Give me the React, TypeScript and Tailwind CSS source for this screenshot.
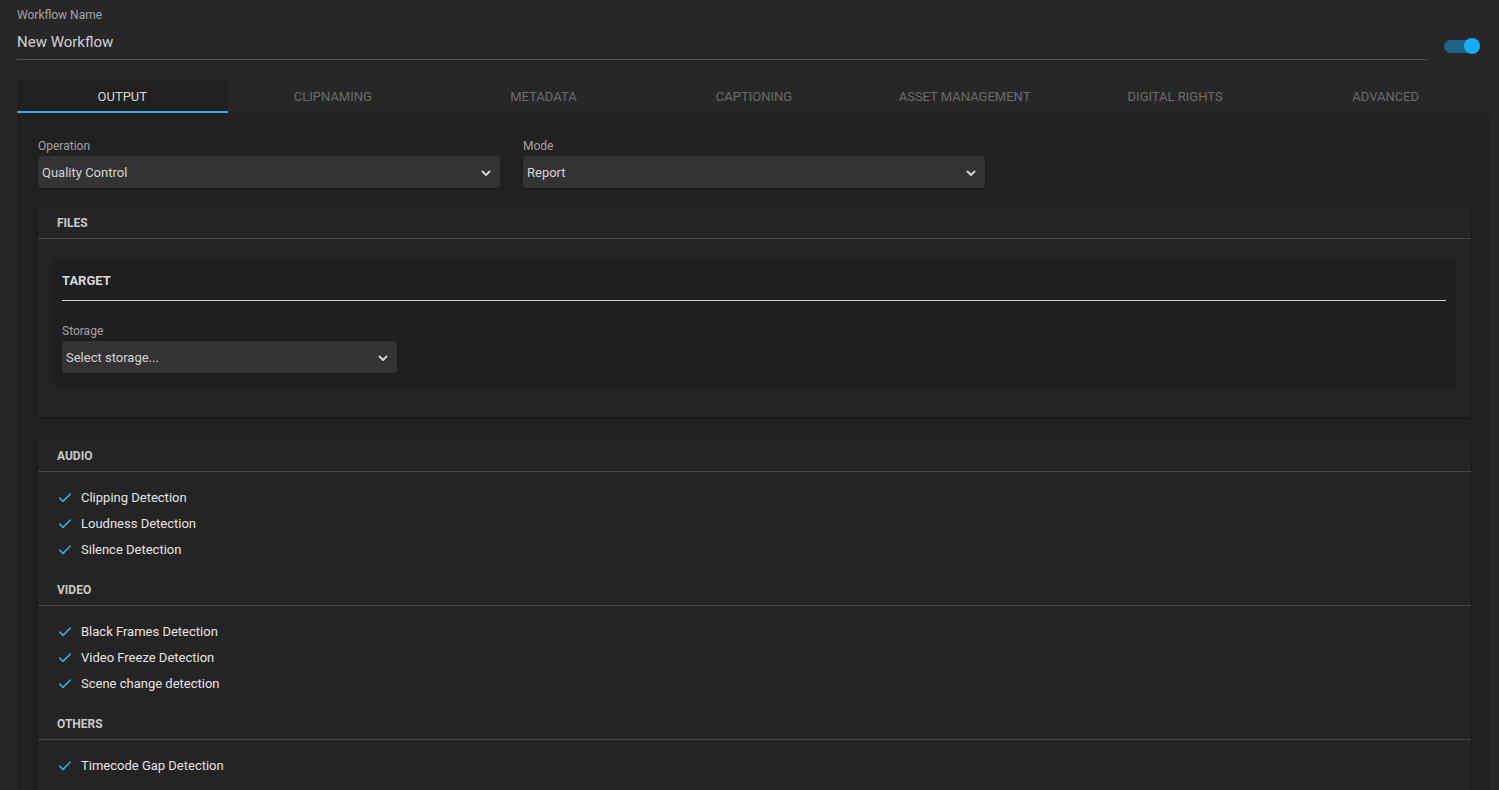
import { Check } from 'lucide-react';

const tabs = ['Output', 'Clipnaming', 'Metadata', 'Captioning', 'Asset Management', 'Digital Rights', 'Advanced'];

const sections = [
  { title: 'AUDIO', items: ['Clipping Detection', 'Loudness Detection', 'Silence Detection'] },
  { title: 'VIDEO', items: ['Black Frames Detection', 'Video Freeze Detection', 'Scene change detection'] },
  { title: 'OTHERS', items: ['Timecode Gap Detection'] },
];

function Chevron() {
  return (
    <svg width="10" height="7" viewBox="0 0 10 7" className="text-[#d0d0d0]">
      <path d="M1.5 1.5l3.5 3.5 3.5-3.5" fill="none" stroke="currentColor" strokeWidth="2" strokeLinecap="round" strokeLinejoin="round" />
    </svg>
  );
}

function Select({ label, value, width }: { label: string; value: string; width: string }) {
  return (
    <div className={width}>
      <div className="text-[12px] leading-4 text-[#a3a3a3]">{label}</div>
      <div className="mt-[2px] h-[32px] rounded-[3px] bg-[#333333] flex items-center justify-between pl-[4px] pr-[9px] pt-[2px] shadow-[0_1px_2px_rgba(0,0,0,0.3)]">
        <span className="text-[13px] text-[#d4d4d4]">{value}</span>
        <Chevron />
      </div>
    </div>
  );
}

export default function App() {
  return (
    <div className="min-h-screen bg-[#272727] pl-[17px] pr-[8px] font-['Roboto','Liberation_Sans',sans-serif]">
      {/* Header */}
      <div className="flex pt-[7px]">
        <div className="flex-1">
          <div className="text-[12px] leading-4 text-[#a3a3a3]">Workflow Name</div>
          <div className="mt-[9px] pb-[7px] border-b border-[#4f4f4f] text-[15px] leading-5 text-[#d2d2d2]">New Workflow</div>
        </div>
        <div className="w-[64px] pl-[17px]">
          <div className="relative mt-[31px] h-[16px] w-[36px]">
            <div className="absolute left-0 top-[2px] h-[13px] w-[33px] rounded-full bg-[#1d6585]" />
            <div className="absolute right-0 top-0 h-[16px] w-[16px] rounded-full bg-[#14adf7]" />
          </div>
        </div>
      </div>

      {/* Tabs */}
      <div className="mt-[20px] grid grid-cols-7">
        {tabs.map((t, i) => (
          <div
            key={t}
            className={
              i === 0
                ? 'h-[33px] flex items-center justify-center pt-[2px] bg-[#202020] border-b-2 border-[#3aa7e0] text-[13px] uppercase text-[#d8d8d8]'
                : 'h-[33px] flex items-center justify-center text-[13px] uppercase text-[#6c6c6c]'
            }
          >
            {t}
          </div>
        ))}
      </div>

      {/* Panel */}
      <div className="bg-[#212121] px-[21px] pr-[20px] pt-[25px] pb-[40px]">
        <div className="flex gap-[23px]">
          <Select label="Operation" value="Quality Control" width="w-[462px]" />
          <Select label="Mode" value="Report" width="w-[462px]" />
        </div>

        {/* Files card */}
        <div className="mt-[19px] bg-[#242424] shadow-[0_1px_3px_rgba(0,0,0,0.45)] pb-[30px]">
          <div className="h-[32px] flex items-center px-[19px] border-b border-[#474747] text-[12px] font-bold text-[#cacaca]">FILES</div>
          <div className="mx-[15px] mt-[20px] bg-[#1f1f1f] px-[9px] pr-[10px] pt-[14px] pb-[14px]">
            <div className="pb-[11px] border-b border-[#d0d0d0] text-[13px] leading-4 font-bold text-[#d8d8d8]">TARGET</div>
            <div className="mt-[22px]">
              <Select label="Storage" value="Select storage..." width="w-[335px]" />
            </div>
          </div>
        </div>

        {/* QC card */}
        <div className="mt-[23px] bg-[#242424] shadow-[0_1px_3px_rgba(0,0,0,0.45)] pb-[20px]">
          {sections.map((s) => (
            <div key={s.title}>
              <div className="h-[32px] flex items-center px-[19px] border-b border-[#474747] text-[12px] font-bold text-[#cacaca]">{s.title}</div>
              <div className="pt-[13px] pb-[11px]">
                {s.items.map((it) => (
                  <div key={it} className="h-[26px] flex items-center pl-[19px] gap-[8px]">
                    <Check size={16} strokeWidth={2.4} className="text-[#3ea9de]" />
                    <span className="text-[13px] text-[#e4e4e4]">{it}</span>
                  </div>
                ))}
              </div>
            </div>
          ))}
        </div>
      </div>
    </div>
  );
}
